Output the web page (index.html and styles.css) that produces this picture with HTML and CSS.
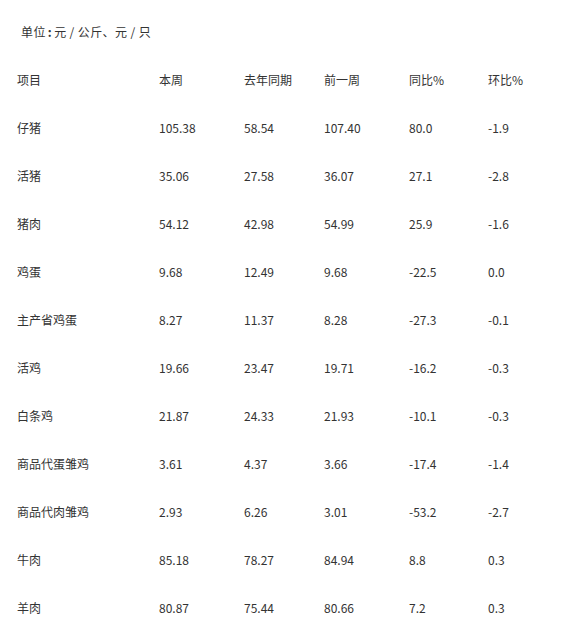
FILE: index.html
```html
<!DOCTYPE html>
<html lang="zh">
<head>
<meta charset="utf-8">
<link rel="stylesheet" href="styles.css">
</head>
<body>
<div class="page">
  <p class="unit">单位<span class="colon">:</span>元 / 公斤、元 / 只</p>
  <table class="data">
    <colgroup>
      <col class="c1"><col class="c2"><col class="c3"><col class="c4"><col class="c5"><col class="c6">
    </colgroup>
    <tr><td>项目</td><td>本周</td><td>去年同期</td><td>前一周</td><td>同比%</td><td>环比%</td></tr>
    <tr><td>仔猪</td><td>105.38</td><td>58.54</td><td>107.40</td><td>80.0</td><td>-1.9</td></tr>
    <tr><td>活猪</td><td>35.06</td><td>27.58</td><td>36.07</td><td>27.1</td><td>-2.8</td></tr>
    <tr><td>猪肉</td><td>54.12</td><td>42.98</td><td>54.99</td><td>25.9</td><td>-1.6</td></tr>
    <tr><td>鸡蛋</td><td>9.68</td><td>12.49</td><td>9.68</td><td>-22.5</td><td>0.0</td></tr>
    <tr><td>主产省鸡蛋</td><td>8.27</td><td>11.37</td><td>8.28</td><td>-27.3</td><td>-0.1</td></tr>
    <tr><td>活鸡</td><td>19.66</td><td>23.47</td><td>19.71</td><td>-16.2</td><td>-0.3</td></tr>
    <tr><td>白条鸡</td><td>21.87</td><td>24.33</td><td>21.93</td><td>-10.1</td><td>-0.3</td></tr>
    <tr><td>商品代蛋雏鸡</td><td>3.61</td><td>4.37</td><td>3.66</td><td>-17.4</td><td>-1.4</td></tr>
    <tr><td>商品代肉雏鸡</td><td>2.93</td><td>6.26</td><td>3.01</td><td>-53.2</td><td>-2.7</td></tr>
    <tr><td>牛肉</td><td>85.18</td><td>78.27</td><td>84.94</td><td>8.8</td><td>0.3</td></tr>
    <tr><td>羊肉</td><td>80.87</td><td>75.44</td><td>80.66</td><td>7.2</td><td>0.3</td></tr>
  </table>
</div>
</body>
</html>
```
FILE: styles.css
```css
html, body {
  margin: 0;
  padding: 0;
  background: #ffffff;
}
body {
  font-family: "Noto Sans CJK SC", "Noto Sans", sans-serif;
  font-size: 12px;
  color: #333333;
}
.page {
  padding: 0 0 0 17px;
}
.unit {
  margin: 0;
  padding: 24px 0 0 4px;
  line-height: 16px;
  box-sizing: border-box;
  height: 40px;
  letter-spacing: 0.4px;
}
.colon {
  display: inline-block;
  margin: 0 2px 0 2px;
  font-weight: bold;
}
.data {
  border-collapse: collapse;
  table-layout: fixed;
  width: 540px;
  margin-top: 16px;
}
.data td {
  height: 48px;
  padding: 0;
  line-height: 16px;
  vertical-align: middle;
  white-space: nowrap;
}
.data tr:not(:first-child) td {
  height: 48px;
}
.c1 { width: 142px; }
.c2 { width: 85px; }
.c3 { width: 80px; }
.c4 { width: 85px; }
.c5 { width: 79px; }
.c6 { width: 69px; }
```
